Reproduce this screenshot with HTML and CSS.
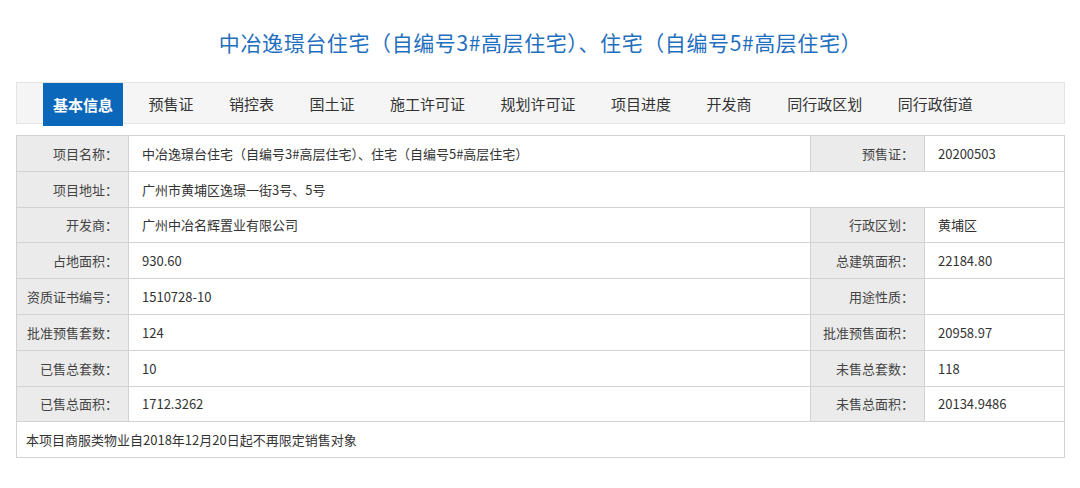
FILE: index.html
```html
<!DOCTYPE html>
<html lang="zh-CN">
<head>
<meta charset="utf-8">
<title>中冶逸璟台住宅</title>
<link rel="stylesheet" href="styles.css">
</head>
<body>
<div class="page">
  <h1 class="title">中冶逸璟台住宅（自编号3#高层住宅）、住宅（自编号5#高层住宅）</h1>
  <nav class="tabs">
    <a class="tab active">基本信息</a>
    <a class="tab">预售证</a>
    <a class="tab">销控表</a>
    <a class="tab">国土证</a>
    <a class="tab">施工许可证</a>
    <a class="tab">规划许可证</a>
    <a class="tab">项目进度</a>
    <a class="tab">开发商</a>
    <a class="tab">同行政区划</a>
    <a class="tab">同行政街道</a>
  </nav>
  <table class="info">
    <colgroup>
      <col class="c-label">
      <col class="c-value">
      <col class="c-label2">
      <col class="c-value2">
    </colgroup>
    <tr>
      <th>项目名称：</th>
      <td>中冶逸璟台住宅（自编号3#高层住宅）、住宅（自编号5#高层住宅）</td>
      <th>预售证：</th>
      <td>20200503</td>
    </tr>
    <tr>
      <th>项目地址：</th>
      <td colspan="3">广州市黄埔区逸璟一街3号、5号</td>
    </tr>
    <tr>
      <th>开发商：</th>
      <td>广州中冶名辉置业有限公司</td>
      <th>行政区划：</th>
      <td>黄埔区</td>
    </tr>
    <tr>
      <th>占地面积：</th>
      <td>930.60</td>
      <th>总建筑面积：</th>
      <td>22184.80</td>
    </tr>
    <tr>
      <th>资质证书编号：</th>
      <td>1510728-10</td>
      <th>用途性质：</th>
      <td></td>
    </tr>
    <tr>
      <th>批准预售套数：</th>
      <td>124</td>
      <th>批准预售面积：</th>
      <td>20958.97</td>
    </tr>
    <tr>
      <th>已售总套数：</th>
      <td>10</td>
      <th>未售总套数：</th>
      <td>118</td>
    </tr>
    <tr>
      <th>已售总面积：</th>
      <td>1712.3262</td>
      <th>未售总面积：</th>
      <td>20134.9486</td>
    </tr>
    <tr>
      <td class="note" colspan="4">本项目商服类物业自2018年12月20日起不再限定销售对象</td>
    </tr>
  </table>
</div>
</body>
</html>
```
FILE: styles.css
```css
html, body {
  margin: 0;
  padding: 0;
  background: #ffffff;
}
body {
  font-family: "Noto Sans CJK SC", "Noto Sans", "Liberation Sans", sans-serif;
  color: #333333;
}
.page {
  padding: 0 15px 0 16px;
}
.title {
  margin: 0;
  height: 82px;
  box-sizing: border-box;
  padding-top: 28px;
  font-size: 21px;
  line-height: 28px;
  letter-spacing: 0.6px;
  font-weight: normal;
  color: #1f6fbf;
  text-align: center;
}
.tabs {
  display: flex;
  align-items: stretch;
  gap: 15.5px;
  height: 42px;
  padding-left: 26px;
  background: #f5f5f5;
  border: 1px solid #e4e4e4;
  box-sizing: border-box;
}
.tab {
  display: flex;
  align-items: center;
  padding: 0 10px;
  font-size: 15px;
  color: #333333;
  cursor: pointer;
}
.tab.active {
  background: #0b67b9;
  color: #ffffff;
  font-weight: bold;
  margin-bottom: -3px;
}
.info {
  margin-top: 11px;
  width: 100%;
  border-collapse: collapse;
  table-layout: fixed;
  font-size: 13px;
}
.c-label { width: 112px; }
.c-label2 { width: 114px; }
.c-value2 { width: 140px; }
.info th,
.info td {
  height: 35.8px;
  border: 1px solid #d2d2d2;
  padding: 0 12px;
  box-sizing: border-box;
  white-space: nowrap;
  font-weight: normal;
}
.info th {
  background: #ebebeb;
  color: #444444;
  text-align: right;
  padding: 0 10px 0 4px;
}
.info td {
  color: #333333;
  text-align: left;
  padding-left: 13px;
}
.info td.note {
  padding-left: 9px;
}
```
